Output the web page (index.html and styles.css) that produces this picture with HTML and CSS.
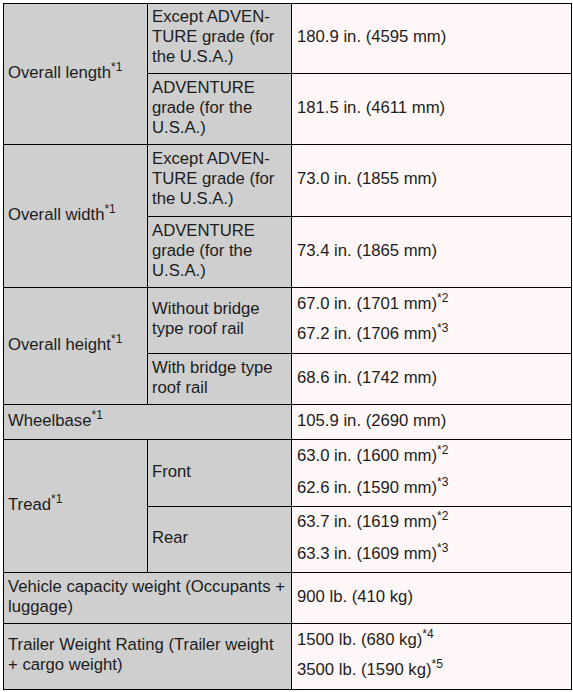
FILE: index.html
```html
<!DOCTYPE html>
<html lang="en">
<head>
    <meta charset="UTF-8">
    <title>Dimensions</title>
    <link rel="stylesheet" href="styles.css">
</head>
<body>

<table class="spec">
    <colgroup>
        <col class="c1">
        <col class="c2">
        <col class="c3">
    </colgroup>
    <!-- length -->
    <tr class="h70">
        <td class="label" rowspan="2">Overall length<sup>*1</sup></td>
        <td class="label">Except ADVEN-<br>TURE grade (for<br>the U.S.A.)</td>
        <td class="value">180.9 in. (4595 mm)</td>
    </tr>
    <tr class="h71">
        <td class="label">ADVENTURE<br>grade (for the<br>U.S.A.)</td>
        <td class="value">181.5 in. (4611 mm)</td>
    </tr>
    <!-- width -->
    <tr class="h72">
        <td class="label" rowspan="2">Overall width<sup>*1</sup></td>
        <td class="label">Except ADVEN-<br>TURE grade (for<br>the U.S.A.)</td>
        <td class="value">73.0 in. (1855 mm)</td>
    </tr>
    <tr class="h71">
        <td class="label">ADVENTURE<br>grade (for the<br>U.S.A.)</td>
        <td class="value">73.4 in. (1865 mm)</td>
    </tr>
    <!-- height -->
    <tr class="h66">
        <td class="label" rowspan="2">Overall height<sup>*1</sup></td>
        <td class="label">Without bridge<br>type roof rail</td>
        <td class="value">
            <p>67.0 in. (1701 mm)<sup>*2</sup></p>
            <p>67.2 in. (1706 mm)<sup>*3</sup></p>
        </td>
    </tr>
    <tr class="h51">
        <td class="label">With bridge type<br>roof rail</td>
        <td class="value">68.6 in. (1742 mm)</td>
    </tr>
    <!-- wheelbase -->
    <tr class="h35">
        <td class="label" colspan="2">Wheelbase<sup>*1</sup></td>
        <td class="value">105.9 in. (2690 mm)</td>
    </tr>
    <!-- tread -->
    <tr class="h67">
        <td class="label" rowspan="2">Tread<sup>*1</sup></td>
        <td class="label">Front</td>
        <td class="value tread">
            <p>63.0 in. (1600 mm)<sup>*2</sup></p>
            <p>62.6 in. (1590 mm)<sup>*3</sup></p>
        </td>
    </tr>
    <tr class="h66">
        <td class="label">Rear</td>
        <td class="value tread">
            <p>63.7 in. (1619 mm)<sup>*2</sup></p>
            <p>63.3 in. (1609 mm)<sup>*3</sup></p>
        </td>
    </tr>
    <!-- weights -->
    <tr class="h51">
        <td class="label" colspan="2">Vehicle capacity weight (Occupants +<br>luggage)</td>
        <td class="value">900 lb. (410 kg)</td>
    </tr>
    <tr class="h66">
        <td class="label" colspan="2">Trailer Weight Rating (Trailer weight<br>+ cargo weight)</td>
        <td class="value">
            <p>1500 lb. (680 kg)<sup>*4</sup></p>
            <p>3500 lb. (1590 kg)<sup>*5</sup></p>
        </td>
    </tr>
</table>

</body>
</html>
```

FILE: styles.css
```css
*{
    margin: 0;
    padding: 0;
}
body{
    background-color: #FFFFFF;
    padding: 3px 0 0 3px;
}
.spec{
    width: 568px;
    border-collapse: collapse;
    table-layout: fixed;
    font-family: "Liberation Sans", Arial, sans-serif;
    font-size: 16.7px;
    line-height: 20px;
    color: #1c1c1c;
}
.c1{ width: 144px; }
.c2{ width: 144px; }
.c3{ width: 280px; }
td{
    border: 1px solid #000000;
    vertical-align: middle;
    padding: 0 3px 3px 4px;
}
.label{
    background-color: #CFCFCF;
}
.value{
    background-color: #FFF7F7;
    padding-left: 5px;
}
.value p + p{
    margin-top: 10px;
}
.tread p + p{
    margin-top: 12px;
}
sup{
    font-size: 12px;
    line-height: 0;
    vertical-align: 7px;
}
.h35{ height: 35px; }
.h51{ height: 51px; }
.h66{ height: 66px; }
.h67{ height: 67px; }
.h70{ height: 70px; }
.h71{ height: 71px; }
.h72{ height: 72px; }
```
